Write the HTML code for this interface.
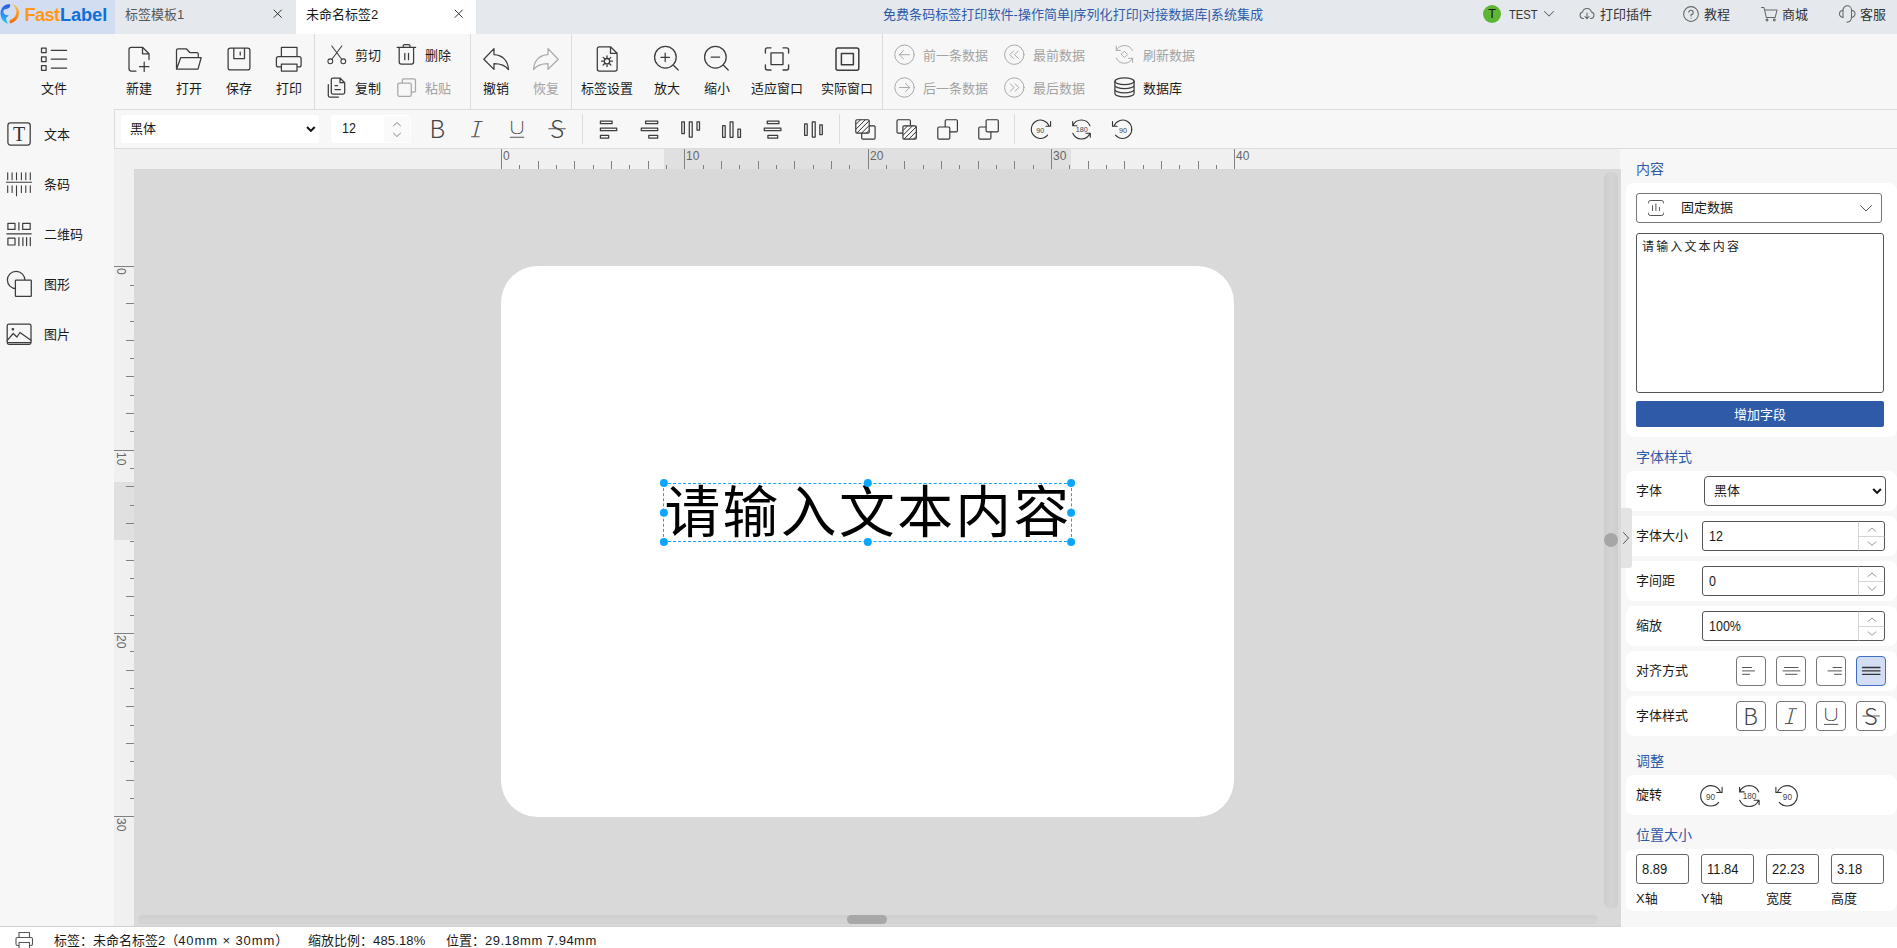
<!DOCTYPE html>
<html lang="zh-CN">
<head>
<meta charset="utf-8">
<title>FastLabel</title>
<style>
*{box-sizing:border-box;margin:0;padding:0}
html,body{width:1897px;height:948px;overflow:hidden}
body{position:relative;background:#f7f7f7;font-family:"Liberation Sans","Noto Sans CJK SC",sans-serif;font-size:13px;color:#1a1a1a}
.a{position:absolute}
.t{position:absolute;white-space:nowrap;line-height:16px;height:16px}
.c{text-align:center}
svg{position:absolute;overflow:visible}
.ic{fill:none;stroke:#3c3c3c;stroke-width:1.25;stroke-linecap:round;stroke-linejoin:round}
.dis{color:#a3a3a3}
.g{font-family:'Noto Sans CJK SC',sans-serif;font-weight:200;color:#444}
.sep{position:absolute;width:1px;background:#dcdcdc}
/* top bar */
#top{left:0;top:0;width:1897px;height:34px;background:#e5e9ed}
#logo{left:0;top:0;width:114.700px;height:34px;background:#d2ddf1}
#tab2{left:296px;top:0;width:180px;height:34px;background:#fff}
/* toolbar */
#tb{left:0;top:34px;width:1897px;height:75px;background:#f7f7f7}
#fmt{left:114px;top:109px;width:1783px;height:40px;background:#f7f7f7;border:1px solid #dcdcdc;border-right:0}
/* canvas */
#hr{left:114px;top:149px;width:1506px;height:20px;background:#f0f0f0}
#vr{left:114px;top:169px;width:20px;height:758px;background:#f0f0f0}
#cv{left:134px;top:169px;width:1487px;height:758px;background:#d9d9d9}
#label{left:500.600px;top:265.600px;width:733.800px;height:551.100px;background:#fff;border-radius:36.700px}
#rp{left:1621px;top:149px;width:276px;height:778px;background:#f7f7f7}
#sb{left:0;top:927px;width:1897px;height:21px;background:#fff}
#sbl{left:0;top:926px;width:1621px;height:1px;background:#d0d0d0}
.card{position:absolute;left:1626px;width:271px;background:#fff;border-radius:8px}
.h{position:absolute;left:1636px;color:#2f5aa8;white-space:nowrap;line-height:16px;font-size:14px}
.inp{position:absolute;background:#fff;border:1px solid #767676;border-radius:3px}
</style>
</head>
<body>
<!-- TOPBAR -->
<div id="top" class="a"></div>
<div id="logo" class="a"></div>
<div id="tab2" class="a"></div>
<svg style="left:0;top:0" width="24" height="30" viewBox="0 0 24 30">
<linearGradient id="lgb" x1="0" y1="0" x2="0" y2="1"><stop offset="0" stop-color="#2a55e8"/><stop offset=".35" stop-color="#2f7df2"/><stop offset="1" stop-color="#22c4f4"/></linearGradient>
<linearGradient id="lgo" x1="0" y1="0" x2="0" y2="1"><stop offset="0" stop-color="#ffc04a"/><stop offset=".5" stop-color="#fb9a1c"/><stop offset="1" stop-color="#ee6a0c"/></linearGradient>
<path fill="url(#lgb)" d="M10 4.300C4.500 3.400 .4 8.300 .5 13.500C.6 18.500 3.600 22.600 8.300 23.700C6.300 21.600 5.800 19.400 6.400 17.500C7.500 17.100 8.400 16.200 8.800 15C7 15.500 5.200 15.100 4 13.600C3 12.100 3.300 10.500 4.400 9.500C5.900 9.100 7.600 8.900 8.900 8C10.100 7.100 10.400 5.700 10 4.300Z"/>
<path fill="url(#lgo)" d="M11.300 4.100C16 5 19 8.600 19 13.100C19 18.100 15 22.600 10.400 23.400C9.200 22.600 9.200 20.800 10.500 19.800C14 18.500 16.400 15.500 16.400 12C16.400 9 14.500 5.900 11.300 4.100Z"/>
</svg>
<div class="t" style="left:24.500px;top:3px;font-size:18.300px;line-height:24px;height:24px;font-weight:bold;letter-spacing:-.7px"><span style="color:#ff9914">Fast</span><span style="color:#0f70d8;letter-spacing:-.1px;margin-left:.6px">Label</span></div>
<div class="t" style="left:125px;top:6px;color:#555;line-height:17px">标签模板1</div>
<svg class="ic" style="left:274.300px;top:10.300px;stroke:#333;stroke-width:1" width="8" height="8" viewBox="0 0 8 8"><path d="M0 0L7.400 7.400M7.400 0L0 7.400"/></svg>
<div class="t" style="left:306px;top:6px;color:#1a1a1a;line-height:17px">未命名标签2</div>
<svg class="ic" style="left:455.300px;top:10.300px;stroke:#333;stroke-width:1" width="8" height="8" viewBox="0 0 8 8"><path d="M0 0L7.400 7.400M7.400 0L0 7.400"/></svg>
<div class="t" style="left:883px;top:6px;color:#2f5aa8;line-height:17px;letter-spacing:.05px">免费条码标签打印软件-操作简单|序列化打印|对接数据库|系统集成</div>
<div class="a" style="left:1483px;top:5px;width:18px;height:18px;border-radius:9px;background:#5db534"></div>
<div class="t" style="left:1483px;top:6px;width:18px;text-align:center;font-size:12.500px;color:#111;line-height:17px">T</div>
<div class="t" style="left:1509px;top:6px;color:#333;line-height:17px;transform:scaleX(.86);transform-origin:0 0">TEST</div>
<svg class="ic" style="left:1544px;top:11px;stroke:#666;stroke-width:1.05" width="10" height="6" viewBox="0 0 10 6"><path d="M.5 .5L5 5L9.500 .5"/></svg>
<svg class="ic" style="left:1579px;top:6px;stroke:#666;stroke-width:1.05" width="16" height="16" viewBox="0 0 16 16"><path d="M4.500 12.500H4A3.300 3.300 0 0 1 3.600 6 4.500 4.500 0 0 1 12.400 6 3.300 3.300 0 0 1 12 12.500H11.500"/><path d="M8 7V12.500M5.800 10.500L8 12.700L10.200 10.500"/></svg>
<div class="t" style="left:1600px;top:6px;color:#333;line-height:17px">打印插件</div>
<svg class="ic" style="left:1683px;top:6px;stroke:#666;stroke-width:1.05" width="16" height="16" viewBox="0 0 16 16"><circle cx="8" cy="8" r="7.400"/><path d="M5.800 6.300A2.200 2.200 0 1 1 8 8.600V10"/><path d="M8 12V12.200"/></svg>
<div class="t" style="left:1704px;top:6px;color:#333;line-height:17px">教程</div>
<svg class="ic" style="left:1761px;top:6px;stroke:#666;stroke-width:1.05" width="17" height="16" viewBox="0 0 17 16"><path d="M.5 1.500H3L5.300 11.500H14.200L16 4H3.700"/><circle cx="6" cy="14" r=".9"/><circle cx="13.300" cy="14" r=".9"/></svg>
<div class="t" style="left:1782px;top:6px;color:#333;line-height:17px">商城</div>
<svg class="ic" style="left:1839px;top:5px;stroke:#666;stroke-width:1.05" width="17" height="18" viewBox="0 0 17 18"><path d="M4 12.300V5.050A4.250 4.250 0 0 1 12.500 5.050V12.300C12.500 15 10.500 17 7.800 17.200"/><path d="M4 5.200C1.500 5.600 .5 7.200 .5 8.800S1.500 12 4 12.400M12.500 5.200C15 5.600 16 7.200 16 8.800S15 12 12.500 12.400"/></svg>
<div class="t" style="left:1860px;top:6px;color:#333;line-height:17px">客服</div>

<!-- TOOLBAR -->
<div id="tb" class="a"></div>
<div class="sep" style="left:314px;top:34px;height:75px"></div>
<div class="sep" style="left:470px;top:34px;height:75px"></div>
<div class="sep" style="left:571px;top:34px;height:75px"></div>
<div class="sep" style="left:882px;top:34px;height:75px"></div>
<div class="t c" style="left:24px;top:81px;width:60px">文件</div>
<div class="t c" style="left:109px;top:81px;width:60px">新建</div>
<div class="t c" style="left:159px;top:81px;width:60px">打开</div>
<div class="t c" style="left:209px;top:81px;width:60px">保存</div>
<div class="t c" style="left:259px;top:81px;width:60px">打印</div>
<div class="t" style="left:355px;top:48px">剪切</div>
<div class="t" style="left:425px;top:48px">删除</div>
<div class="t" style="left:355px;top:81px">复制</div>
<div class="t dis" style="left:425px;top:81px">粘贴</div>
<div class="t c" style="left:466px;top:81px;width:60px">撤销</div>
<div class="t c dis" style="left:516px;top:81px;width:60px">恢复</div>
<div class="t c" style="left:567px;top:81px;width:80px">标签设置</div>
<div class="t c" style="left:637px;top:81px;width:60px">放大</div>
<div class="t c" style="left:687px;top:81px;width:60px">缩小</div>
<div class="t c" style="left:737px;top:81px;width:80px">适应窗口</div>
<div class="t c" style="left:807px;top:81px;width:80px">实际窗口</div>
<div class="t dis" style="left:923px;top:48px">前一条数据</div>
<div class="t dis" style="left:1033px;top:48px">最前数据</div>
<div class="t dis" style="left:1143px;top:48px">刷新数据</div>
<div class="t dis" style="left:923px;top:81px">后一条数据</div>
<div class="t dis" style="left:1033px;top:81px">最后数据</div>
<div class="t" style="left:1143px;top:81px">数据库</div>
<svg class="ic" style="left:0;top:0" width="1897" height="120" viewBox="0 0 1897 120">
<!-- file list -->
<path d="M41.500 48.100h4.600v4.600h-4.600zM41.500 56.900h4.600v4.600h-4.600zM41.500 65.700h4.600v4.600h-4.600zM51.300 50.400H66.600M51.300 59.200H66.600M51.300 68H66.600"/>
<!-- new -->
<path d="M142.500 47.300H131.200a2.200 2.200 0 0 0-2.200 2.200V68.800a2.200 2.200 0 0 0 2.200 2.200H136M142.500 47.300L149 53.800V59.500M142.500 47.300V53.800H149M144.200 62V71.400M139.500 66.700H148.900"/>
<!-- open -->
<path d="M176.500 69V50.300a1.500 1.500 0 0 1 1.500-1.500H186.300L189.800 52.500H196.800a1.500 1.500 0 0 1 1.500 1.500V57.500M180.800 57.500H201.200L198 69.200H176.500Z"/>
<!-- save -->
<path d="M230.300 48.100H247.700a2.200 2.200 0 0 1 2.200 2.200V67.700a2.200 2.200 0 0 1-2.200 2.200H230.300a2.200 2.200 0 0 1-2.200-2.200V50.300a2.200 2.200 0 0 1 2.200-2.200ZM233.800 48.100V58.600H244.500V48.100M240.200 52V55"/>
<!-- print -->
<path d="M281.400 56.700V47.300H297V56.700M281.400 66.900H278.400a2 2 0 0 1-2-2V58.700a2 2 0 0 1 2-2H299.100a2 2 0 0 1 2 2V64.900a2 2 0 0 1-2 2H297M281.400 64.200H297V71.100H281.400Z"/>
<!-- scissors -->
<g stroke-width="1.050"><path d="M331.800 46L341.700 59.300M341.800 46L331.900 59.300"/><circle cx="330.300" cy="61.300" r="2.400"/><circle cx="343.300" cy="61.300" r="2.400"/></g>
<!-- trash -->
<path d="M397.200 47.400H415.600M403.200 47.200V46a1.500 1.500 0 0 1 1.500-1.500H408.500a1.500 1.500 0 0 1 1.500 1.500V47.200M399.200 47.400V62a2 2 0 0 0 2 2H411.600a2 2 0 0 0 2-2V47.400M404.800 53.300V59.700M408.500 53.300V59.700"/>
<!-- copy -->
<path d="M340 78H332.800a1.500 1.500 0 0 0-1.500 1.500V92.500a1.500 1.500 0 0 0 1.500 1.500H343.200a1.500 1.500 0 0 0 1.500-1.500V82.700ZM340 78V82.700H344.700M328.300 84.600V95.600a1.500 1.500 0 0 0 1.500 1.500H338.500M335 85.600H337.500M335 89.600H340.500"/>
<!-- paste (disabled) -->
<g stroke="#a8a8a8"><rect x="402.300" y="78.900" width="13.200" height="13.200" rx="1.600"/><rect x="397.800" y="83.100" width="13.500" height="13.200" rx="1.600" fill="#f7f7f7"/></g>
<!-- undo -->
<path d="M494 48.600L483.800 59.200L494 69.400V63.500C500.500 63.500 505.500 65.500 508.500 69.600C508 60.500 502.500 55 494 54.600Z"/>
<!-- redo -->
<path stroke="#a8a8a8" d="M548 48.600L558.200 59.200L548 69.400V63.500C541.500 63.500 536.500 65.500 533.500 69.600C534 60.500 539.500 55 548 54.600Z"/>
<!-- label settings -->
<path d="M610.500 46.800H599.300a2 2 0 0 0-2 2V69a2 2 0 0 0 2 2H615.100a2 2 0 0 0 2-2V53.300ZM610.500 46.800V53.300H617.100"/>
<g stroke-width="1.300"><circle cx="607" cy="61.200" r="2.700"/><path d="M607 55.800V57.500M607 64.900V66.600M601.600 61.200H603.300M610.700 61.200H612.400M603.200 57.400L604.400 58.600M609.600 63.800L610.800 65M603.200 65L604.400 63.800M609.600 58.600L610.800 57.400"/></g>
<!-- zoom in/out -->
<circle cx="665.400" cy="57.200" r="10.800"/><path d="M673.200 65L678.200 70M661 57.400H669.400M665.200 53.200V61.600"/>
<circle cx="715.400" cy="57.200" r="10.800"/><path d="M723.200 65L728.200 70M711.200 57.200H719.600"/>
<!-- fit -->
<path stroke-width="1.350" d="M771 47.800H767.400a2 2 0 0 0-2 2V53M783 47.800H786.600a2 2 0 0 1 2 2V53M771 70H767.400a2 2 0 0 1-2-2V64.800M783 70H786.600a2 2 0 0 0 2-2V64.800M771 52.800H783V64.600H771Z"/>
<!-- actual -->
<path stroke-width="1.500" d="M838 47.900H856.800a2 2 0 0 1 2 2V68.200a2 2 0 0 1-2 2H838a2 2 0 0 1-2-2V49.900a2 2 0 0 1 2-2ZM841.400 53.600H853.400V64.700H841.400Z"/>
<!-- data nav -->
<g stroke="#aaa" stroke-width="1">
<circle cx="904.500" cy="54.700" r="9.700"/><path d="M899.500 54.700H909.500M903.500 50.500L899.300 54.700L903.500 58.900"/>
<circle cx="904.500" cy="87.500" r="9.700"/><path d="M899.500 87.500H909.500M905.500 83.300L909.700 87.500L905.500 91.700"/>
<circle cx="1014.300" cy="54.700" r="9.700"/><path d="M1013.500 51L1009.800 54.700L1013.500 58.400M1018.300 51L1014.600 54.700L1018.300 58.400"/>
<circle cx="1014.300" cy="87.500" r="9.700"/><path d="M1010.300 83.800L1014 87.500L1010.300 91.200M1015.100 83.800L1018.800 87.500L1015.100 91.200"/>
<path d="M1116.300 50.500A9.200 9.200 0 0 1 1132.600 50.500M1116.300 46.100V50.500H1120.400M1132.600 58.300A9.200 9.200 0 0 1 1116.300 58.300M1128.600 58.300H1132.600V62.400M1124.500 51.400L1127.600 54.500L1124.500 57.600L1121.400 54.500Z"/>
</g>
<!-- database -->
<ellipse cx="1124.500" cy="81.200" rx="9.600" ry="3.400"/><path d="M1114.900 81.200V93.500C1114.900 95.400 1119.200 96.900 1124.500 96.900S1134.100 95.400 1134.100 93.500V81.200M1114.900 85.300C1114.900 87.200 1119.200 88.700 1124.500 88.700S1134.100 87.200 1134.100 85.300M1114.900 89.400C1114.900 91.300 1119.200 92.800 1124.500 92.800S1134.100 91.300 1134.100 89.400"/>
</svg>

<div id="fmt" class="a"></div>
<div class="a" style="left:121px;top:115px;width:198px;height:28px;background:#fff;border-radius:4px"></div>
<div class="t" style="left:130px;top:121px">黑体</div>
<div class="a" style="left:331px;top:115px;width:80px;height:28px;background:#fff;border-radius:3px"></div>
<div class="a" style="left:384px;top:116px;width:26px;height:26px;background:#fafafa"></div>
<div class="t" style="left:341.500px;top:121px;transform:scale(.96,1.08);transform-origin:0 55%">12</div>
<div class="sep" style="left:582px;top:114px;height:30px"></div>
<div class="sep" style="left:839px;top:114px;height:30px"></div>
<div class="sep" style="left:1014px;top:114px;height:30px"></div>
<div class="t g" id="fB" style="left:429.500px;top:112.500px;font-size:24.300px;line-height:30px;height:30px">B</div>
<div class="t g" id="fI" style="left:473.700px;top:113px;font-size:20.800px;line-height:30px;height:30px;transform:skewX(-14.700deg)">I</div>
<div class="t g" id="fU" style="left:511.200px;top:112px;font-size:17.400px;line-height:30px;height:30px;font-weight:100;transform:scaleX(1.420);transform-origin:50% 50%">U</div>
<div class="t g" id="fS" style="left:550px;top:112.800px;font-size:24.300px;line-height:30px;height:30px">S</div>
<svg class="ic" style="left:0;top:100px" width="1897" height="60" viewBox="0 100 1897 60">
<path stroke="#111" stroke-width="2" stroke-linecap="butt" stroke-linejoin="miter" d="M307 127L310.850 130.900L314.700 127"/>
<path stroke="#888" stroke-width="1" d="M393.500 125.800L397 122.500L400.500 125.800M393.500 133.200L397 136.500L400.500 133.200"/>
<path stroke-width="1.100" stroke="#555" d="M510.300 137.300H523.800M548.800 128.800H565.300M474.800 121.500H482.300M471.600 136.700H479.200"/>
<!-- align left -->
<path d="M600.400 121.100h11.700v2.600h-11.700zM600.400 128.100h16.300v2.600h-16.300zM600.400 135.400h8.300v2.600h-8.300z"/>
<!-- align right -->
<path d="M645.600 121.100h12.100v2.600h-12.100zM641.300 128.100h16.400v2.600h-16.400zM648.800 135.400h8.900v2.600h-8.900z"/>
<!-- align top -->
<path d="M681.800 121.800h2.600v11.800h-2.600zM689.300 121.800h2.900v15.200h-2.900zM697 121.800h2.500v8.200h-2.500z"/>
<!-- align bottom -->
<path d="M722.600 125.500h2.600v11.800h-2.600zM730.100 121.800h2.900v15.500h-2.900zM737.900 129.200h2.600v8.100h-2.600z"/>
<!-- center h -->
<path d="M767.300 121.100h11.600v2.600h-11.600zM764.300 128.100h16.600v2.600h-16.600zM767.900 135.400h9.800v2.600h-9.800z"/>
<!-- center v -->
<path d="M804.600 123.900h2.600v11.400h-2.600zM812.300 121.800h2.900v15.200h-2.900zM819.800 124.800h2.500v9.700h-2.500z"/>
</svg>

<div class="t" style="left:44px;top:126.500px">文本</div>
<div class="t" style="left:44px;top:176.500px">条码</div>
<div class="t" style="left:44px;top:226.500px">二维码</div>
<div class="t" style="left:44px;top:276.500px">图形</div>
<div class="t" style="left:44px;top:326.500px">图片</div>
<div class="t" style="left:7px;top:122.500px;width:24px;text-align:center;font-family:'Liberation Serif',serif;font-size:20px;line-height:23px;height:23px;color:#333">T</div>
<svg class="ic" style="left:0;top:110px" width="114" height="250" viewBox="0 110 114 250">
<rect x="7.900" y="122.900" width="22.300" height="22.200" rx="2.500"/>
<!-- barcode -->
<path stroke-width="1.100" d="M7.700 172.800V179.800M12.100 172.800V179.800M16.500 172.800V179.800M21.400 172.800V179.800M25.800 172.800V179.800M30.300 172.800V179.800M6.400 182.300H31.600M7.700 185.700V192.400M12.100 185.700V192.400M16.500 185.700V195.800M21.400 185.700V192.400M25.800 185.700V192.400M30.300 185.700V192.400"/>
<!-- qr -->
<path stroke-width="1.200" d="M7.900 223.300H15V229.400H7.900ZM22.700 223.300H30.200V229.400H22.700ZM7.900 238.100H15V245H7.900ZM18.900 222.700V230M6.800 233.800H31.200M18.900 237.600V245.600M22.900 237.600V245.600M26.600 237.600V245.600M30.300 237.600V245.600"/>
<!-- shapes -->
<circle cx="16.100" cy="280" r="8.700"/><rect x="15.400" y="280.100" width="15.900" height="16.200" rx=".6" fill="#f7f7f7"/>
<!-- image -->
<rect x="7.200" y="324" width="23.800" height="20.300" rx="1.800"/><path d="M7.300 340.300L13.200 333.500L16.900 337L20 332.500L30.900 340.300M7.600 342.700H30.600"/><circle cx="12.900" cy="329.300" r=".7" fill="#3c3c3c"/>
</svg>

<!-- CANVAS -->
<div id="hr" class="a"></div>
<div id="vr" class="a"></div>
<div id="cv" class="a"></div>
<div id="label" class="a"></div>
<div class="a" style="left:664px;top:149px;width:407px;height:20px;background:#e0e0e0"></div>
<div class="a" style="left:114px;top:482px;width:20px;height:58px;background:#e0e0e0"></div>
<svg style="left:0;top:0" width="1640" height="948" viewBox="0 0 1640 948" fill="none" stroke="#808080" stroke-width="1">
<path d="M501.5 149V169M519.5 165V169M538.5 161V169M556.5 165V169M574.5 161V169M593.5 165V169M611.5 161V169M629.5 165V169M648.5 161V169M666.5 165V169M684.5 149V169M703.5 165V169M721.5 161V169M739.5 165V169M758.5 161V169M776.5 165V169M794.5 161V169M813.5 165V169M831.5 161V169M849.5 165V169M868.5 149V169M886.5 165V169M904.5 161V169M923.5 165V169M941.5 161V169M959.5 165V169M978.5 161V169M996.5 165V169M1014.5 161V169M1033.5 165V169M1051.5 149V169M1069.5 165V169M1088.5 161V169M1106.5 165V169M1124.5 161V169M1143.5 165V169M1161.5 161V169M1179.5 165V169M1198.5 161V169M1216.5 165V169M1234.5 149V169M114 266.5H134M130 285.5H134M126 303.5H134M130 321.5H134M126 340.5H134M130 358.5H134M126 376.5H134M130 395.5H134M126 413.5H134M130 431.5H134M114 450.5H134M130 468.5H134M126 486.5H134M130 505.5H134M126 523.5H134M130 541.5H134M126 560.5H134M130 578.5H134M126 596.5H134M130 615.5H134M114 633.5H134M130 651.5H134M126 670.5H134M130 688.5H134M126 706.5H134M130 725.5H134M126 743.5H134M130 761.5H134M126 780.5H134M130 798.5H134M114 816.5H134"/>
</svg>
<div class="t" style="left:503px;top:149px;font-size:12px;line-height:14px;height:14px;color:#666">0</div>
<div class="t" style="left:686px;top:149px;font-size:12px;line-height:14px;height:14px;color:#666">10</div>
<div class="t" style="left:870px;top:149px;font-size:12px;line-height:14px;height:14px;color:#666">20</div>
<div class="t" style="left:1053px;top:149px;font-size:12px;line-height:14px;height:14px;color:#666">30</div>
<div class="t" style="left:1236px;top:149px;font-size:12px;line-height:14px;height:14px;color:#666">40</div>
<div class="t" style="left:128px;top:268px;font-size:12px;line-height:14px;height:14px;color:#666;transform:rotate(90deg);transform-origin:0 0">0</div>
<div class="t" style="left:128px;top:452px;font-size:12px;line-height:14px;height:14px;color:#666;transform:rotate(90deg);transform-origin:0 0">10</div>
<div class="t" style="left:128px;top:635px;font-size:12px;line-height:14px;height:14px;color:#666;transform:rotate(90deg);transform-origin:0 0">20</div>
<div class="t" style="left:128px;top:818px;font-size:12px;line-height:14px;height:14px;color:#666;transform:rotate(90deg);transform-origin:0 0">30</div>
<div class="a" style="left:1604px;top:172px;width:14px;height:737px;border-radius:7px;background:linear-gradient(90deg,#cdcdcd,#d4d4d4 50%,#cdcdcd)"></div>
<div class="a" style="left:138px;top:915px;width:1460px;height:9px;border-radius:5px;background:linear-gradient(180deg,#cdcdcd,#d4d4d4 60%,#d2d2d2)"></div>
<div class="a" style="left:847px;top:915px;width:40px;height:9px;border-radius:5px;background:#a8a8a8"></div>
<div class="a" style="left:1604px;top:533px;width:14px;height:14px;border-radius:7px;background:#a6a6a6"></div>
<div class="t" style="left:664.400px;top:477.300px;letter-spacing:2.400px;font-family:'Liberation Sans','Noto Sans CJK SC',sans-serif;font-size:55.800px;line-height:72px;height:72px;color:#000">请输入文本内容</div>
<div class="a" style="left:663.400px;top:482.500px;width:408.200px;height:59.900px;border:1px dashed #14a3fa"></div>
<svg style="left:0;top:0" width="1640" height="948" viewBox="0 0 1640 948" fill="#0ca5ff">
<circle cx="663.900" cy="483" r="4"/><circle cx="867.800" cy="483" r="4"/><circle cx="1071.100" cy="483" r="4"/>
<circle cx="663.900" cy="512.700" r="4"/><circle cx="1071.100" cy="512.700" r="4"/>
<circle cx="663.900" cy="541.900" r="4"/><circle cx="867.800" cy="541.900" r="4"/><circle cx="1071.100" cy="541.900" r="4"/>
</svg>

<!-- RIGHT -->
<div id="rp" class="a"></div>
<div class="h" style="top:161px">内容</div>
<div class="card" style="top:183px;height:254px"></div>
<div class="inp" style="left:1636px;top:193px;width:246px;height:30px"></div>
<svg class="ic" style="left:1648px;top:200px;stroke:#555;stroke-width:1" width="16" height="16" viewBox="0 0 16 16"><path d="M3 .5H2.500a2 2 0 0 0-2 2V3M13 .5H13.500a2 2 0 0 1 2 2V3M3 15.500H2.500a2 2 0 0 1-2-2V13M13 15.500H13.500a2 2 0 0 0 2-2V13M3 .5H13M3 15.500H13M4.500 5.700V10.500M7.900 3.900V10.500M11.500 7.600V10.500"/></svg>
<div class="t" style="left:1681px;top:200px">固定数据</div>
<svg class="ic" style="left:1860px;top:205px;stroke:#555;stroke-width:1" width="12" height="7" viewBox="0 0 12 7"><path d="M.5 .5L6 6L11.500 .5"/></svg>
<div class="inp" style="left:1636px;top:233px;width:248px;height:160px;border-color:#555"></div>
<div class="t" style="left:1642px;top:240px;font-family:'Liberation Mono','Noto Sans CJK SC',monospace;font-size:12px;letter-spacing:2.150px;color:#222">请输入文本内容</div>
<div class="a" style="left:1636px;top:401px;width:248px;height:26px;background:#2f5aa8;border-radius:2px"></div>
<div class="t c" style="left:1636px;top:407px;width:248px;color:#fff">增加字段</div>
<div class="h" style="top:449px">字体样式</div>
<div class="card" style="top:471px;height:40px"></div>
<div class="card" style="top:516px;height:40px"></div>
<div class="card" style="top:561px;height:40px"></div>
<div class="card" style="top:606px;height:40px"></div>
<div class="card" style="top:651px;height:40px"></div>
<div class="card" style="top:696px;height:40px"></div>
<div class="t" style="left:1636px;top:483px">字体</div>
<div class="t" style="left:1636px;top:528px">字体大小</div>
<div class="t" style="left:1636px;top:573px">字间距</div>
<div class="t" style="left:1636px;top:618px">缩放</div>
<div class="t" style="left:1636px;top:663px">对齐方式</div>
<div class="t" style="left:1636px;top:708px">字体样式</div>
<div class="inp" style="left:1704px;top:476px;width:182px;height:30px;border-color:#555;border-radius:4px"></div>
<div class="t" style="left:1714px;top:483px">黑体</div>
<svg class="ic" style="left:1872px;top:488px;stroke:#111;stroke-width:2;stroke-linecap:butt;stroke-linejoin:miter" width="10" height="6" viewBox="0 0 10 6"><path d="M1.200 1L5.050 4.900L8.900 1"/></svg>
<div class="inp" style="left:1702px;top:521px;width:183px;height:30px;border-color:#555"></div>
<div class="inp" style="left:1702px;top:566px;width:183px;height:30px;border-color:#555"></div>
<div class="inp" style="left:1702px;top:611px;width:183px;height:30px;border-color:#555"></div>
<div class="t" style="left:1708.600px;top:529px;transform:scale(.96,1.08);transform-origin:0 55%">12</div>
<div class="t" style="left:1708.600px;top:574px;transform:scale(.96,1.08);transform-origin:0 55%">0</div>
<div class="t" style="left:1708.600px;top:619px;transform:scale(.96,1.08);transform-origin:0 55%">100%</div>
<svg class="ic" style="left:1850px;top:515px;stroke:#999;stroke-width:1" width="40" height="130" viewBox="1850 515 40 130">
<path stroke="#d4d4d4" d="M1858.500 522V550M1858.500 536.500H1884M1858.500 567V595M1858.500 581.500H1884M1858.500 612V640M1858.500 626.500H1884"/>
<path d="M1868 531.500L1872 528L1876 531.500M1868 541.800L1872 545.300L1876 541.800M1868 576.500L1872 573L1876 576.500M1868 586.800L1872 590.300L1876 586.800M1868 621.500L1872 618L1876 621.500M1868 631.800L1872 635.300L1876 631.800"/>
</svg>
<div class="inp" style="left:1736px;top:656px;width:30px;height:30px;border-radius:4px"></div>
<div class="inp" style="left:1776px;top:656px;width:30px;height:30px;border-radius:4px"></div>
<div class="inp" style="left:1816px;top:656px;width:30px;height:30px;border-radius:4px"></div>
<div class="inp" style="left:1856px;top:656px;width:30px;height:30px;border-radius:4px;background:#d3ddf4;border-color:#3f6ec6"></div>
<div class="inp" style="left:1736px;top:701px;width:30px;height:30px;border-radius:4px"></div>
<div class="inp" style="left:1776px;top:701px;width:30px;height:30px;border-radius:4px"></div>
<div class="inp" style="left:1816px;top:701px;width:30px;height:30px;border-radius:4px"></div>
<div class="inp" style="left:1856px;top:701px;width:30px;height:30px;border-radius:4px"></div>
<svg class="ic" style="left:1730px;top:650px;stroke:#555;stroke-width:1" width="160" height="90" viewBox="1730 650 160 90">
<path d="M1742.500 667.500H1751.500M1742.500 670.900H1754.500M1742.500 674.300H1749.500"/>
<path d="M1784.500 667.500H1798M1783 670.900H1800M1785.500 674.300H1797"/>
<path d="M1833 667.500H1841.500M1828 670.900H1841.500M1834.500 674.300H1841.500"/>
<path stroke="#333" stroke-width="1.300" d="M1862.500 667.500H1880M1862.500 670.900H1880M1862.500 674.300H1880"/>
<path d="M1824.400 724.400H1837.800M1862.800 716H1879.400M1789.200 708.700H1796.700M1785.300 723.500H1792.400"/>
</svg>
<div class="t g" style="left:1743.200px;top:700.500px;font-size:22.800px;line-height:30px;height:30px">B</div>
<div class="t g" style="left:1788px;top:700.500px;font-size:20.200px;line-height:30px;height:30px;transform:skewX(-14.700deg)">I</div>
<div class="t g" style="left:1825.400px;top:699px;font-size:17.400px;line-height:30px;height:30px;font-weight:100;transform:scaleX(1.420);transform-origin:50% 50%">U</div>
<div class="t g" style="left:1864px;top:700px;font-size:23.500px;line-height:30px;height:30px">S</div>
<div class="h" style="top:753px">调整</div>
<div class="card" style="top:775px;height:40px"></div>
<div class="t" style="left:1636px;top:787px">旋转</div>
<div class="h" style="top:827px">位置大小</div>
<div class="card" style="top:849px;height:62px"></div>
<div class="inp" style="left:1636px;top:854px;width:53px;height:30px;border-color:#666"></div>
<div class="inp" style="left:1701px;top:854px;width:53px;height:30px;border-color:#666"></div>
<div class="inp" style="left:1766px;top:854px;width:53px;height:30px;border-color:#666"></div>
<div class="inp" style="left:1831px;top:854px;width:53px;height:30px;border-color:#666"></div>
<div class="t" style="left:1642px;top:862px;transform:scale(1,1.08);transform-origin:0 55%">8.89</div>
<div class="t" style="left:1707px;top:862px;transform:scale(1,1.08);transform-origin:0 55%">11.84</div>
<div class="t" style="left:1772px;top:862px;transform:scale(1,1.08);transform-origin:0 55%">22.23</div>
<div class="t" style="left:1837px;top:862px;transform:scale(1,1.08);transform-origin:0 55%">3.18</div>
<div class="t" style="left:1636px;top:891px">X轴</div>
<div class="t" style="left:1701px;top:891px">Y轴</div>
<div class="t" style="left:1766px;top:891px">宽度</div>
<div class="t" style="left:1831px;top:891px">高度</div>
<div class="a" style="left:1621px;top:508px;width:11px;height:60px;background:#e3e3e3;border-radius:0 3px 3px 0"></div>
<svg class="ic" style="left:1622.700px;top:532.300px;stroke:#555;stroke-width:1" width="6" height="12" viewBox="0 0 6 12"><path d="M.5 .5L5.500 6L.5 11.500"/></svg>

<!-- STATUS -->
<div id="sb" class="a"></div>
<div id="sbl" class="a"></div>
<svg class="ic" style="left:15px;top:930.500px;stroke:#555;stroke-width:1.100" width="19" height="18" viewBox="0 0 19 18"><path d="M4 6.500V1.500H14.500V6.500M4 14.500H2.500a1.500 1.500 0 0 1-1.500-1.500V8a1.500 1.500 0 0 1 1.500-1.500H16a1.500 1.500 0 0 1 1.500 1.500V13a1.500 1.500 0 0 1-1.500 1.500H14.500M4 11.500H14.500V18H4Z"/></svg>
<div class="t" style="left:54px;top:933px">标签：未命名标签2（<span style="letter-spacing:.9px">40mm × 30mm</span>）</div>
<div class="t" style="left:308px;top:933px">缩放比例：<span style="letter-spacing:.15px">485.18%</span></div>
<div class="t" style="left:446px;top:933px">位置：<span style="letter-spacing:.5px">29.18mm 7.94mm</span></div>

<svg style="left:0;top:0" width="1897" height="948" viewBox="0 0 1897 948">
<g fill="#f7f7f7" stroke="#333" stroke-width="1.15" stroke-linejoin="round"><rect x="861.7" y="125.8" width="13.4" height="13.3" rx="1.2"/><rect x="855.8" y="119.7" width="13.4" height="13.4" rx="1.2"/><path stroke-width="1" d="M855.8 124.5L860.6 119.7M855.8 129.3L865.4 119.7M856.8 133.1L869.2 120.7M861.6 133.1L869.2 125.5M866.4 133.1L869.2 130.3"/><rect x="897" y="119.700" width="13.4" height="13.4" rx="1.2"/><rect x="902.9" y="125.8" width="13.4" height="13.3" rx="1.2"/><path stroke-width="1" d="M902.9 130.6L907.7 125.8M902.9 135.4L912.5 125.8M904.0 139.1L916.3 126.8M908.8 139.1L916.3 131.6M913.6 139.1L916.3 136.4"/><rect x="945.2" y="119.700" width="12.2" height="12.2" rx="1.2"/><rect x="937.8" y="127" width="12" height="12.100" rx="1.2"/><rect x="978.8" y="127" width="12.100" height="12.100" rx="1.2"/><rect x="986.1" y="119.700" width="12.2" height="12.2" rx="1.2"/></g>
<g fill="none" stroke="#333" stroke-width="1.10" stroke-linecap="round" stroke-linejoin="round"><path d="M1049.2 126.2 A9.2 9.2 0 1 0 1047.6 135.2 M1050.6 121.5 V126.2 H1045.9"/></g><text x="1040.2" y="132.6" text-anchor="middle" font-size="7.2px" fill="#444" stroke="none" font-family="Liberation Sans,sans-serif">90</text>
<g fill="none" stroke="#333" stroke-width="1.10" stroke-linecap="round" stroke-linejoin="round"><path d="M1072.8 125.7 A9.3 9.3 0 0 1 1090.0 125.7 M1072.7 121.5 V125.7 H1076.9"/><path d="M1090.0 133.2 A9.3 9.3 0 0 1 1072.8 133.2 M1090.3 137.3 V133.2 H1085.9"/></g><text x="1081.8" y="131.8" text-anchor="middle" font-size="7.2px" fill="#444" stroke="none" font-family="Liberation Sans,sans-serif">180</text>
<g fill="none" stroke="#333" stroke-width="1.10" stroke-linecap="round" stroke-linejoin="round"><path d="M1113.9 126.2 A9.2 9.2 0 1 1 1115.5 135.2 M1112.5 121.5 V126.2 H1117.2"/></g><text x="1122.9" y="132.6" text-anchor="middle" font-size="7.2px" fill="#444" stroke="none" font-family="Liberation Sans,sans-serif">90</text>
<g fill="none" stroke="#333" stroke-width="1.10" stroke-linecap="round" stroke-linejoin="round"><path d="M1720.5 792.5 A10.2 10.2 0 1 0 1718.7 802.4 M1722.1 787.3 V792.5 H1716.8"/></g><text x="1710.6" y="799.6" text-anchor="middle" font-size="8.2px" fill="#444" stroke="none" font-family="Liberation Sans,sans-serif">90</text>
<g fill="none" stroke="#333" stroke-width="1.10" stroke-linecap="round" stroke-linejoin="round"><path d="M1739.7 791.9 A10.3 10.3 0 0 1 1758.7 791.9 M1739.6 787.2 V791.9 H1744.2"/><path d="M1758.7 800.2 A10.3 10.3 0 0 1 1739.7 800.2 M1759.1 804.8 V800.2 H1754.2"/></g><text x="1749.6" y="798.7" text-anchor="middle" font-size="8.2px" fill="#444" stroke="none" font-family="Liberation Sans,sans-serif">180</text>
<g fill="none" stroke="#333" stroke-width="1.10" stroke-linecap="round" stroke-linejoin="round"><path d="M1777.5 792.5 A10.2 10.2 0 1 1 1779.3 802.4 M1775.9 787.3 V792.5 H1781.2"/></g><text x="1787.4" y="799.6" text-anchor="middle" font-size="8.2px" fill="#444" stroke="none" font-family="Liberation Sans,sans-serif">90</text>
</svg>

</body>
</html>
